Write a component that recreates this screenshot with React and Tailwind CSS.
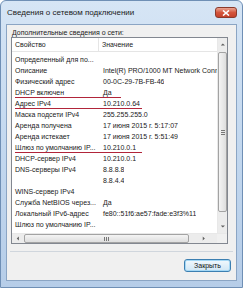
import React from "react";

const rows = [
  ["Определенный для по...", ""],
  ["Описание", "Intel(R) PRO/1000 MT Network Conn"],
  ["Физический адрес", "00-0C-29-7B-FB-46"],
  ["DHCP включен", "Да", 106],
  ["Адрес IPv4", "10.210.0.64", 127],
  ["Маска подсети IPv4", "255.255.255.0"],
  ["Аренда получена", "17 июня 2015 г. 5:17:07"],
  ["Аренда истекает", "17 июня 2015 г. 5:51:49"],
  ["Шлюз по умолчанию IP...", "10.210.0.1", 127],
  ["DHCP-сервер IPv4", "10.210.0.1"],
  ["DNS-серверы IPv4", "8.8.8.8"],
  ["", "8.8.4.4"],
  ["WINS-сервер IPv4", ""],
  ["Служба NetBIOS через...", "Да"],
  ["Локальный IPv6-адрес", "fe80::51f6:ae57:fade:e3f3%11"],
  ["Шлюз по умолчанию IP...", ""],
  ["DNS-серверы IPv6", ""],
];

const Arrow = ({ dir }) => {
  const pts = {
    up: "1,4 4,1 7,4",
    down: "1,1 4,4 7,1",
    left: "4,1 1,4 4,7",
    right: "1,1 4,4 1,7",
  }[dir];
  const size = dir === "up" || dir === "down" ? "w-[8px] h-[5px]" : "w-[5px] h-[8px]";
  return (
    <svg viewBox={dir === "up" || dir === "down" ? "0 0 8 5" : "0 0 5 8"} className={size}>
      <polygon points={pts} fill="#606060" transform="scale(0.7) translate(1.5,1)" />
    </svg>
  );
};

export default function App() {
  return (
    <div className="w-[243px] h-[288px] flex flex-col border border-[#6f8fb5] rounded-t-[6px] bg-gradient-to-b from-[#d6e5f5] via-[#c3d8ef] to-[#b6cde8] font-['Liberation_Sans',sans-serif] text-[7px] text-[#1a1a1a] overflow-hidden">
      {/* title bar */}
      <div className="h-[23px] flex items-center justify-between pl-[6px] pr-[5px]">
        <span className="text-[8px] text-[#1b1b1b]">Сведения о сетевом подключении</span>
        <div className="w-[22px] h-[11px] rounded-[3px] border border-[#8a3a2c] bg-gradient-to-b from-[#e8a493] via-[#d4553c] to-[#c5422b] flex items-center justify-center">
          <svg viewBox="0 0 8 6" className="w-[8px] h-[6px]">
            <path d="M1 0.5 L7 5.5 M7 0.5 L1 5.5" stroke="#fff" strokeWidth="1.6" />
          </svg>
        </div>
      </div>

      {/* content */}
      <div className="flex-1 mx-[5px] mb-[6px] border border-[#8ba5c4] bg-[#f0f0f0] flex flex-col">
        <div className="pl-[5px] pt-[3px] h-[12px] leading-[9px] text-[#222]">
          Дополнительные сведения о сети:
        </div>

        <div className="ml-[4px] w-[217px] h-[207px] border border-[#828790] bg-white flex flex-col">
          <div className="h-[195px] flex">
            {/* list */}
            <div className="flex-1 flex flex-col overflow-hidden">
              <div className="h-[14px] flex border-b border-[#e5e5e5] leading-[13px] text-[#222]">
                <div className="w-[87px] pl-[3px] border-r border-[#e5e5e5]">Свойство</div>
                <div className="pl-[3px]">Значение</div>
              </div>
              <div className="pt-[2px] flex flex-col">
                {rows.map(([k, v, line], i) => (
                  <div key={i} className="relative h-[11px] leading-[11px] flex whitespace-nowrap">
                    <div className="w-[88px] pl-[3px] overflow-hidden shrink-0">{k}</div>
                    <div className="pl-[3px] overflow-hidden">{v}</div>
                    {line && (
                      <div
                        className="absolute left-[3px] bottom-[0px] h-[1.5px] bg-[#b1253a]"
                        style={{ width: line }}
                      />
                    )}
                  </div>
                ))}
              </div>
            </div>
            {/* vertical scrollbar */}
            <div className="w-[10px] bg-[#ececec] border-l border-[#e8e8e8] flex flex-col items-center">
              <div className="h-[12px] flex items-center justify-center">
                <Arrow dir="up" />
              </div>
              <div className="mt-[2px] w-[9px] h-[160px] rounded-[2px] border border-[#a3a3a3] bg-gradient-to-r from-[#f4f4f4] to-[#dedede] flex items-center justify-center">
                <div className="flex flex-col gap-[1px]">
                  <div className="w-[4px] h-px bg-[#777]" />
                  <div className="w-[4px] h-px bg-[#777]" />
                  <div className="w-[4px] h-px bg-[#777]" />
                </div>
              </div>
              <div className="flex-1 flex items-end justify-center pb-[4px]">
                <Arrow dir="down" />
              </div>
            </div>
          </div>
          {/* horizontal scrollbar */}
          <div className="h-[10px] flex bg-[#ececec] border-t border-[#e8e8e8]">
            <div className="flex-1 flex items-center">
              <div className="w-[10px] flex items-center justify-center">
                <Arrow dir="left" />
              </div>
              <div className="ml-[2px] w-[165px] h-[9px] rounded-[2px] border border-[#a3a3a3] bg-gradient-to-b from-[#f4f4f4] to-[#dedede] flex items-center justify-center">
                <div className="flex gap-[1px]">
                  <div className="w-px h-[4px] bg-[#777]" />
                  <div className="w-px h-[4px] bg-[#777]" />
                  <div className="w-px h-[4px] bg-[#777]" />
                </div>
              </div>
              <div className="flex-1 flex items-center justify-center">
                <Arrow dir="right" />
              </div>
            </div>
            <div className="w-[10px] bg-[#f0f0f0]" />
          </div>
        </div>

        <div className="mt-[7px] mx-[3px] h-px bg-[#d0d6dd]" />
        <div className="flex justify-end pr-[5px] pt-[7px]">
          <button className="w-[47px] h-[13px] rounded-[3px] border border-[#3c7fb1] bg-gradient-to-b from-[#f2f9fd] to-[#cfe6f5] text-[7px] leading-[11px] text-[#111] shadow-[inset_0_0_0_1px_#a5d8f5]">
            Закрыть
          </button>
        </div>
      </div>
    </div>
  );
}
